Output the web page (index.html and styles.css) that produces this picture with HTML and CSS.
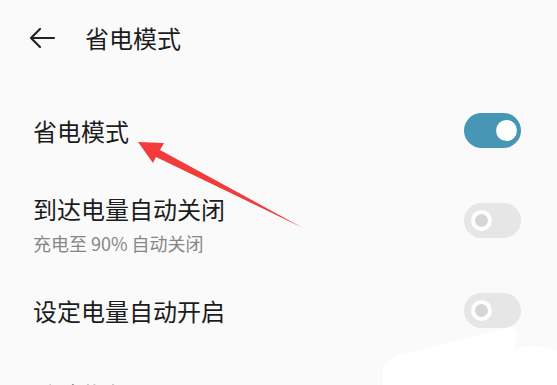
FILE: index.html
```html
<!DOCTYPE html>
<html lang="zh-CN">
<head>
<meta charset="utf-8">
<link rel="stylesheet" href="styles.css">
</head>
<body>
<div class="page">
  <header class="header">
    <svg class="back" width="28" height="22" viewBox="0 0 28 22">
      <path d="M26 11H3M12 2L3 11l9 9" fill="none" stroke="#222" stroke-width="2.2" stroke-linecap="round" stroke-linejoin="round"/>
    </svg>
    <h1 class="title">省电模式</h1>
  </header>
  <div class="list">
    <div class="item item-first">
      <div class="label">省电模式</div>
      <div class="toggle on"><span class="knob"></span></div>
    </div>
    <div class="item item-second">
      <div class="text">
        <div class="label">到达电量自动关闭</div>
        <div class="sub">充电至 90% 自动关闭</div>
      </div>
      <div class="toggle off"><span class="knob"></span></div>
    </div>
    <div class="item item-third">
      <div class="label">设定电量自动开启</div>
      <div class="toggle off"><span class="knob"></span></div>
    </div>
    <div class="item item-fourth">
      <div class="label">默认优化 画面</div>
    </div>
  </div>
  <svg class="overlay" width="557" height="385" viewBox="0 0 557 385">
    <path d="M383,385 L383,368 Q386,356 420,350 L505,328 Q519,325 517,339 L513,348 Q540,344 557,351 L557,385 Z" fill="#ffffff"/>
    <path d="M138,142 L164,143 L160,150 L303,228 L156,157 L153,163 Z" fill="#f23b3b"/>
  </svg>
</div>
</body>
</html>
```

FILE: styles.css
```css
html, body {
  margin: 0;
  padding: 0;
  background: #fafafa;
}
.page {
  position: relative;
  width: 557px;
  height: 385px;
  overflow: hidden;
  font-family: "Noto Sans CJK SC", "Noto Sans", sans-serif;
  color: #1c1c1c;
}
.header {
  display: flex;
  align-items: center;
  height: 76px;
  padding-left: 28px;
}
.back {
  display: block;
}
.title {
  margin: 0 0 0 29px;
  font-size: 24px;
  font-weight: 400;
  line-height: 32px;
}
.list {
  padding-top: 16px;
}
.item {
  display: flex;
  align-items: center;
  justify-content: space-between;
  padding: 0 36px 0 33px;
}
.item-first {
  padding-top: 21px;
  padding-bottom: 21px;
}
.item-second {
  padding-top: 24px;
  padding-bottom: 24px;
}
.item-third {
  padding-top: 14px;
  padding-bottom: 14px;
}
.item-fourth {
  padding-top: 37px;
}
.label {
  font-size: 24px;
  line-height: 32px;
}
.sub {
  margin-top: 6px;
  font-size: 18px;
  line-height: 24px;
  color: #868686;
}
.item-second .toggle {
  margin-top: -8px;
}
.toggle {
  position: relative;
  width: 57px;
  height: 35px;
  border-radius: 18px;
  flex: none;
}
.toggle.on {
  background: #4796b6;
}
.toggle.off {
  background: #e6e6e6;
}
.knob {
  position: absolute;
  top: 7px;
  width: 21px;
  height: 21px;
  border-radius: 50%;
  box-sizing: border-box;
}
.on .knob {
  right: 4px;
  background: #ffffff;
}
.off .knob {
  left: 7px;
  background: #d6d6d6;
  border: 4px solid #ffffff;
}
.overlay {
  position: absolute;
  left: 0;
  top: 0;
  pointer-events: none;
}
```
